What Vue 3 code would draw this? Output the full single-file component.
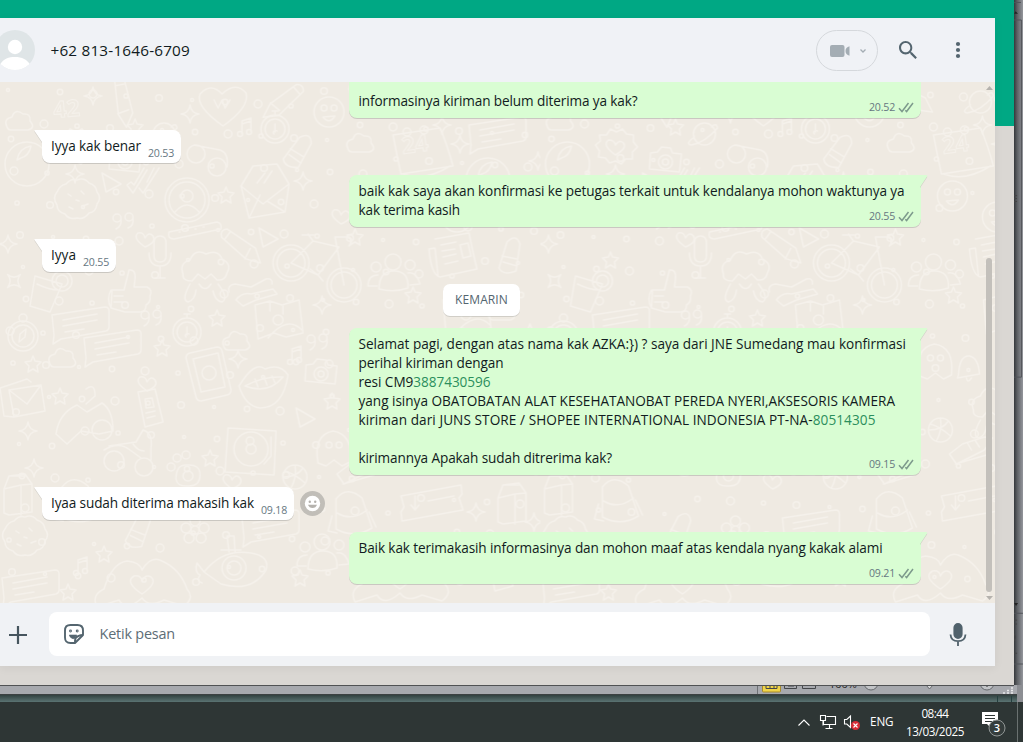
<template>
  <div class="desktop">
    <div class="upper">
      <div class="browser">
        <div class="app">
          <header class="header">
            <svg class="avatar" viewBox="0 0 40 40">
              <defs>
                <clipPath id="avatar-clip"><circle cx="20" cy="20" r="20" /></clipPath>
              </defs>
              <g clip-path="url(#avatar-clip)">
                <rect width="40" height="40" fill="#dfe5e7" />
                <circle cx="20" cy="17" r="7.2" fill="#fff" />
                <path d="M4 36C8 29 13 27 20 27s12 2 16 9l-6 6H10z" fill="#fff" />
              </g>
            </svg>
            <div class="contact"><span v-fit="139.5">+62 813-1646-6709</span></div>
            <button class="video">
              <svg width="22" height="16" viewBox="0 0 22 16">
                <rect x="1" y="2" width="14.5" height="12" rx="2" />
                <path d="M20.5 3.2v9.6c-2.600-.8-4-2.200-4-4.800s1.400-4 4-4.800z" />
              </svg>
              <svg width="8" height="6" viewBox="0 0 8 6">
                <path d="M1.500 1.500L4 4l2.500-2.500" class="chevron" />
              </svg>
            </button>
            <button class="icon search">
              <svg width="24" height="24" viewBox="0 0 24 24">
                <path d="M15.900 14.300H15l-.3-.3c1-1.100 1.600-2.700 1.600-4.300 0-3.700-3-6.700-6.700-6.700S3 6 3 9.700s3 6.700 6.700 6.700c1.600 0 3.200-.6 4.300-1.600l.3.3v.8l5.100 5.100 1.500-1.500-5-5.200zm-6.200 0c-2.600 0-4.600-2.100-4.600-4.600s2.100-4.600 4.600-4.600 4.600 2.100 4.600 4.600-2 4.600-4.600 4.600z" />
              </svg>
            </button>
            <button class="icon">
              <svg width="24" height="24" viewBox="0 0 24 24">
                <circle cx="12" cy="6" r="2.100" />
                <circle cx="12" cy="12" r="2.100" />
                <circle cx="12" cy="18" r="2.100" />
              </svg>
            </button>
          </header>

          <main class="chat">
            <svg class="wallpaper" width="995" height="521">
              <defs>
                <pattern id="doodles" width="540.5" height="521" patternUnits="userSpaceOnUse">
                  <g
                    v-for="(d, i) in doodles"
                    :key="i"
                    :transform="`translate(${d[1]} ${d[2]}) rotate(${d[3]})`"
                  >
                    <path :d="shapes[d[0]]" />
                  </g>
                  <circle v-for="(d, i) in dots" :key="'c' + i" :cx="d[0]" :cy="d[1]" :r="d[2]" />
                  <text x="403" y="72" transform="rotate(-8 403 72)">24</text>
                  <text x="54" y="36" transform="rotate(-5 54 36)">42</text>
                </pattern>
              </defs>
              <rect width="995" height="521" fill="url(#doodles)" />
            </svg>

            <div class="messages">
              <template v-for="(m, i) in messages" :key="i">
                <div v-if="m.type === 'date'" class="date"><span v-fit="53">{{ m.text }}</span></div>
                <div v-else class="row" :class="m.type">
                  <div class="bubble" :class="{ cut: m.cut, spare: m.spare }">
                    <svg v-if="!m.cut" class="tail" width="8" height="13" viewBox="0 0 8 13">
                      <path v-if="m.type === 'in'" d="M8 0H1.200Q0 0 .5 1L8 12z" />
                      <path v-else d="M0 0h6.200Q8 0 7 1.500L0 12z" />
                    </svg>
                    <div class="text">
                      <div v-for="(line, n) in m.lines" :key="n" class="line">
                        <span v-fit="line.w">{{ line.t }}<b v-if="line.link">{{ line.link }}</b></span>
                      </div>
                    </div>
                    <div class="meta">
                      <span v-fit="26">{{ m.time }}</span>
                      <svg v-if="m.type === 'out'" width="16" height="11" viewBox="0 0 16 11">
                        <path d="M1 6.200l3 3.300L10.500 1M7.300 8.200l1.300 1.300L15 1" />
                      </svg>
                    </div>
                  </div>
                  <button v-if="m.react" class="react">
                    <svg width="25" height="25" viewBox="0 0 25 25">
                      <circle cx="12.500" cy="12.500" r="12.500" fill="#c1beb8" />
                      <circle cx="12.500" cy="12.500" r="7.700" fill="#fff" />
                      <circle cx="9.800" cy="10.700" r="1.200" fill="#b5b2ad" />
                      <circle cx="15.200" cy="10.700" r="1.200" fill="#b5b2ad" />
                      <path d="M8 13.700h9c-.6 2-2.400 3.300-4.500 3.300S8.600 15.700 8 13.700z" fill="#b5b2ad" />
                    </svg>
                  </button>
                </div>
              </template>
            </div>

            <div class="scrollbar">
              <svg width="7" height="4" viewBox="0 0 7 4"><path d="M0 4l3.500-4L7 4z" /></svg>
              <div class="thumb"></div>
              <svg width="7" height="4" viewBox="0 0 7 4"><path d="M0 0l3.500 4L7 0z" /></svg>
            </div>
          </main>

          <footer class="composer">
            <svg class="plus" width="18" height="18" viewBox="0 0 18 18">
              <path d="M9 0v18M0 9h18" />
            </svg>
            <div class="input">
              <svg class="sticker" width="22" height="22" viewBox="0 0 22 22">
                <path d="M7.500 2h7Q20 2 20 7.500V12L12 20H7.500Q2 20 2 14.500v-7Q2 2 7.500 2z" />
                <path d="M12 20q-.2-3.500 1-5.500 2-2 7-2.500" />
                <path d="M6.300 12h7.500l-2 3.600q-4 .8-5.500-3.600z" fill="#54656f" stroke-width=".6" />
                <circle cx="7.500" cy="8" r=".5" />
                <circle cx="14.200" cy="8" r=".5" />
              </svg>
              <span v-fit="75.5">Ketik pesan</span>
            </div>
            <svg class="mic" width="18" height="24" viewBox="0 0 18 24">
              <rect x="5.300" y="1" width="7.400" height="14" rx="3.700" fill="#51626c" />
              <path d="M1.500 11.500c.3 4.200 3.200 6.700 7.500 6.700s7.200-2.500 7.500-6.700M9 18v5" />
            </svg>
          </footer>
        </div>
      </div>

      <!-- edge of the spreadsheet window behind the browser -->
      <svg class="behind" width="9" height="702" viewBox="0 0 9 702">
        <path d="M0 2.500h7M0 20.500h7.500V386.500H0M0 628.500h9M0 680.500h9" stroke="#505358" fill="none" />
        <path d="M0 14l1.500-2.500L4 14zM0 618h4l-2 3z" fill="#222" />
        <path d="M0 200.500h3M0 203.500h3M0 206.500h3M0 635.500h3M0 639.500h3M0 669.500h3" stroke="#444" />
        <path d="M0 649q3 4 0 8" fill="none" stroke="#444" />
      </svg>
    </div>

    <svg class="status" width="1023" height="17" viewBox="0 0 1023 17">
      <defs>
        <linearGradient id="edge" x2="0" y2="1">
          <stop offset="0" stop-color="#2b3938" />
          <stop offset="1" stop-color="#5b7473" />
        </linearGradient>
        <clipPath id="bar"><rect y="1" width="1023" height="8" /></clipPath>
      </defs>
      <rect width="1017" height="9" fill="#a7a9ae" />
      <rect width="1014" height="1" fill="#505254" />
      <rect y="9" width="1023" height="8" fill="url(#edge)" />
      <rect y="9" width="1017" height="1" fill="#3c4142" />
      <g clip-path="url(#bar)">
        <path d="M757.500 0v9" stroke="#6f7276" />
        <rect x="762.500" y="-8" width="18" height="15" rx="1" fill="#f0d449" stroke="#a78a2a" />
        <path d="M766 3.500h11V-2M766 3.500V-2M770 3V0M774 3V0M784.500-4v7.500h12V-4M788 1h6M802.500-4v7.500h13V-4" fill="none" stroke="#44474b" />
        <text x="829" y="3">100%</text>
        <circle cx="871" cy="-2" r="7" fill="#c2c4c7" stroke="#66696d" />
        <path d="M926 0l3.500 4L933 0" fill="#d7d8da" stroke="#66696d" />
        <circle cx="987" cy="-2" r="7" fill="#c2c4c7" stroke="#66696d" />
        <path d="M987-3v5" stroke="#333" />
        <path d="M1011 3h2M1007 5.500h2M1011 5.500h2M1003 8h2M1007 8h2M1011 8h2" stroke="#e7e8ea" stroke-width="1.500" />
      </g>
      <path d="M997.500 11v6M1011.500 11v6" stroke="#25403f" />
      <path d="M1017 0h6v17h-6z" fill="#8c8e93" />
    </svg>

    <div class="taskbar">
      <svg class="tray" width="64" height="18" viewBox="0 0 64 18">
        <path d="M1.500 12.500L7 7l5.500 5.500" />
        <path d="M29.500 3.500h9v8h-12V8M32.500 12v3M28.500 15.500h7M23.500 2.500h5v5h-5zM26 7.500v5" />
        <path d="M47.500 6.500h2.300l3.700-3.500v11.500l-3.700-3.500h-2.300z" />
        <circle cx="58.500" cy="12.500" r="4.500" class="muted" />
        <path d="M56.500 10.500l4 4M60.500 10.500l-4 4" />
      </svg>
      <div class="lang"><span v-fit="23.5">ENG</span></div>
      <div class="clock">
        <div><span v-fit="27">08:44</span></div>
        <div><span v-fit="58">13/03/2025</span></div>
      </div>
      <svg class="notice" width="26" height="28" viewBox="0 0 26 28">
        <path d="M1 2h16v12h-7v4l-4-4H1z" fill="#fff" />
        <path d="M4 5.500h10M4 8.500h10M4 11.500h7" stroke="#2e3635" />
        <circle cx="16" cy="18" r="8" fill="#353d3c" stroke="#929796" />
        <text x="16" y="22" text-anchor="middle">3</text>
      </svg>
      <div class="show-desktop"></div>
    </div>
  </div>
</template>

<script setup>
// Spreads the letters of an element over the given width.
const vFit = {
  mounted(el, { value }) {
    const width = el.getBoundingClientRect().width
    const count = el.textContent.length
    el.style.letterSpacing = `${(value - width) / count}px`
  }
}

const messages = [
  {
    type: 'out',
    cut: true,
    time: '20.52',
    lines: [{ t: 'informasinya kiriman belum diterima ya kak?', w: 279 }]
  },
  { type: 'in', time: '20.53', lines: [{ t: 'Iyya kak benar', w: 90 }] },
  {
    type: 'out',
    time: '20.55',
    lines: [
      { t: 'baik kak saya akan konfirmasi ke petugas terkait untuk kendalanya mohon waktunya ya', w: 546 },
      { t: 'kak terima kasih', w: 101.5 }
    ]
  },
  { type: 'in', time: '20.55', lines: [{ t: 'Iyya', w: 25 }] },
  { type: 'date', text: 'KEMARIN' },
  {
    type: 'out',
    time: '09.15',
    lines: [
      { t: 'Selamat pagi, dengan atas nama kak AZKA:}) ? saya dari JNE Sumedang mau konfirmasi', w: 547.5 },
      { t: 'perihal kiriman dengan', w: 145 },
      { t: 'resi CM9', link: '3887430596', w: 132 },
      { t: 'yang isinya OBATOBATAN ALAT KESEHATANOBAT PEREDA NYERI,AKSESORIS KAMERA', w: 536.5 },
      { t: 'kiriman dari JUNS STORE / SHOPEE INTERNATIONAL INDONESIA PT-NA-', link: '80514305', w: 517 },
      { t: '', w: 0 },
      { t: 'kirimannya Apakah sudah ditrerima kak?', w: 253.5 }
    ]
  },
  { type: 'in', time: '09.18', react: true, lines: [{ t: 'Iyaa sudah diterima makasih kak', w: 203 }] },
  {
    type: 'out',
    spare: true,
    time: '09.21',
    lines: [{ t: 'Baik kak terimakasih informasinya dan mohon maaf atas kendala nyang kakak alami', w: 524 }]
  }
]

const ring = (r, x = 0, y = 0) => `M${x - r} ${y}a${r} ${r} 0 1 0 ${2 * r} 0a${r} ${r} 0 1 0 ${-2 * r} 0`

const shapes = {
  star: 'M0-8l2 5 6 1-4 4 1 6-5-3-5 3 1-6-4-4 6-1z',
  spark: 'M0-9Q1-1 9 0 1 1 0 9-1 1-9 0-1-1 0-9z',
  person: ring(22) + ring(18) + ring(6, 0, -4) + 'M-12 12Q0-2 12 12',
  cookie: 'M-20-8q3-7 9-8 5-6 11-4 7-3 12 3 7 2 8 9 5 6 0 12-1 8-8 9-5 7-12 5-8 2-12-4-8-2-8-9-5-7 0-13z M-9-6l3 2M4-9l3 3M-8 7l4 2M6 6l5-2M-1 0l3 1',
  ball: ring(22) + 'M-10-4q2-12 14-14-2 10-10 12z',
  envelope: 'M-24-6L-12-26 12-28 24-8 20 20-16 26zM-24-6L-2 12 24-8M-5 3l-11 23M2 9l18 11M-8-9l8-10M-1-9l8-12',
  ticks: 'M-16 3l6 8L4-12M-4 6l4 5L16-14M-16 3l4-3 3 3L1-14M4 0l7-14',
  bike: ring(18, -28, 8) + ring(14, -28, 8) + ring(17, 25, 30) + ring(13, 25, 30) + 'M-28 8L-6-14 20-8-1 20zM25 30L16-18h12q8 3 2 9M-6-14l-5-7M-17-20h12M-1 20l-8-6M-1 20l5 6',
  mic: 'M-6-14q0-7 6-7t6 7V-1q0 6-6 6t-6-6zM-11-4q0 13 11 13T11-4M0 9v12M-5 21H5',
  pencil: 'M-20-10q-3-7 4-9L15-4l7 14-15-2-27-18zM-12-17l-5 9M10-3L6 8',
  thumb: 'M-18-2h12L-1-22q7-1 6 9l-1 8h13q6 3 3 9 1 6-4 9 0 7-6 7h-15L-19 16z M-19-2q-5 9 0 18M-16 4h9M-16 10h9',
  grandpa: 'M-22-2q-4-11 7-14 5-12 16-6 12-5 16 5 10 5 5 14-2 8-10 7l-6-6-6 5-7-5-6 7q-10 0-9-7zM-15 8q-9 16-2 18 7-2 8-12M13 8q11 14 4 18-7-1-9-11M-6 8q6 9 12 0',
  compass: ring(15) + ring(11) + ring(4, 0, -18) + 'M-4 6l1-8 6-5-1 8z',
  bubble: 'M-28-9L25-17q4 0 4 4v16q0 3-3 4l-45 8-8 5 1-9zM-17-4L17-10M-17 2l34-6M-15 8L4 5',
  cloud: 'M-13 5q-4-8 5-10 3-9 11-3 8-1 7 7 6 7-2 9h-17q-3 0-4-3z',
  watch: ring(14) + ring(10) + 'M-3-18h6M0-18v4M0-5V3M2 2a2 2 0 1 0-3 3',
  phone: 'M-19-20L8-26q4 0 5 4l9 39q0 4-4 5l-26 6q-4 0-5-4L-23-15q0-4 4-5zM-16-14l25-6 7 34-24 5z' + ring(7),
  lips: 'M-24 0Q-8-26 2-17 17-23 25-11 20 22-3 22-18 20-24 0zM-18 0q18-10 38-9Q5 9-18 0M-8-7l3 8M1-9l3 8M9-10l3 7',
  camera: 'M-15-9l7-1 4-5 9 1 2 5 9 1-2 18-30-3z' + ring(7) + ring(3),
  map: 'M-22-17l15-4 12 4 17-5 4 33-17 4-12-4-16 6zM-9 16Q10-7 25 8M-7-21v10M6-17v9' + ring(5, 1, -2),
  record: 'M-24-18l48 3-2 44-49-3z' + ring(17, -1, 3) + ring(5, -1, 3) + 'M19-9v19l-7 8',
  paw: 'M-9 12q0-15 11-14 13-1 13 10t-11 11Q-8 20-9 12z' + ring(4, -14, 0) + ring(4, -8, -9) + ring(4, 1, -12) + ring(5, 3, 9),
  scooter: ring(10, -17, 7) + ring(9, 13, 13) + 'M-27-4q15-9 26 0l11 8M-22-8l27-4 7-12q10 3 8 18v12M2-10q5 7 11 7',
  scooter2: 'M-30 18q3-21 21-29l10 7 15-9q11 7 11 28l-14 3-18-3-14 13z' + ring(10, 16, 14) + 'M0-27q9-7 9 7l-9 8',
  letters: 'M-27-6L0-15l4 3M-18-4l32-5 4 26-31 6zM-18-4L0 10 14-9M-27-6l4 28 10 1',
  milk: 'M-14-9l5-13 16-2 7 10v28l-23 3-5-2zM-14-9L3-13l11-1M3-13v30M-9-22h16',
  card: 'M-12-16l17-3 8 33-18 5zM-5-9l7-1 2 9-8 1zM-4 5l9-2M-3 10l8-2',
  hands: 'M-45 25q-6-12 7-18 8-26 23-28Q-2-20 0-12q9-15 20-9 18 8 25 28 8 9-3 17L22 18Q7 26 0 16-16 30-23 18zM0 12q-18-12-8-18 7-1 8 5 3-7 9-4 7 6-9 17z',
  plane: 'M-30 4Q-11-20 17-15q19 3 15 17Q18 25-13 16z' + ring(12) + ring(7) + 'M-30 4l-7-9q-3 9 3 12-4 6 2 8M-5-16l-2-16h7l1 16M-13-18h20',
  calendar: 'M-26-19l47-7q7 16 13 38L-18 20q-4-18-8-39zM-16 20q22 8 47-8' + ring(4, -12, -22) + ring(4, 5, -24),
  people: ring(8, 0, -15) + ring(5, -17, -10) + ring(5, 17, -12) + 'M-14 12q0-18 15-18t14 17q-14 5-29 1zM-16 9h-9q0-11 10-11M17 8l10-1Q23-6 15-4',
  paper: 'M-18-19l34-6q4 20 8 36l-37 8q-9-2-11-28l6-1 3 28M-12-13l15-3M-11-7l13-2M-10-1l13-3M-8 6l13-3M7-13l8-2 3 13-8 2z',
  bell: 'M-9 7Q-8-13 2-12 11-10 12 6l-22 4zM-1 10q1 6 5 0',
  basket: ring(12) + 'M-12 0Q2 0 8-9M-4 11Q2 0 0-12M10 6Q0-3-10-6',
  shoe: 'M-23 2l13-10 22-7 8 1-8 12L-16 12zM-17 12l31-9M-5-9l4 7M3-11l4 6',
  planet: ring(11) + 'M-10 3q-10 7-3 8 13-2 26-17-1-6-6-1',
  donut: 'M-20-3l5-4-1-6 7 0 4-6 6 3 6-3 4 5 7 1 0 7 4 5-5 5 0 7-7 0-4 5-6-3-6 2-4-5-7-1 1-6zM0 7q-14-10-7-15 6 0 7 5 4-6 8-2 4 5-8 12',
  drink: 'M-14-14l27 8-12 28-20-6zM-12-6q12 6 22 6' + ring(10, 13, -9) + ring(6, 13, -9),
  bottle: 'M-12 16l8-26q9-9 13 2L5 19Q-8 24-12 16zM-9 4l15 3M-8 10l14 4',
  pack: 'M-16-13Q-5-27 10-14l10 30q-18 11-36 1zM-15 1q15 9 30-3M-20 4l-4 15 9 2M17 0l7 15',
  ticket: 'M-32-8l60-11 1 9-3 4 4 12-61 11-1-9 3-5zM-5-3l26-5M-18-8v14M-22 1l4 5 4-5',
  heart: 'M0 7q-13-9-7-14 6-1 7 5 4-7 8-2 4 6-8 11z',
  bigheart: 'M0 24q-28-20-23-32 11-12 22 0 14-13 24-1 4 14-23 33zM-9-2l4 8 4-8 3 8 5-8',
  ghost: 'M-16 16q-5-28 15-32 20 3 17 31l-8 4-8-6-8 6z' + ring(3, -5, -2) + ring(3, 5, -2),
  smile: ring(15) + ring(3, -5, -4) + ring(3, 5, -4) + 'M-6 5q6 8 12-1z',
  quotes: ring(4, -7, -3) + ring(4, 5, -4) + 'M-3-2q1 7-5 10M9-3q1 8-5 10',
  music: 'M-4 7V-6l9-3V5M-4-3l9-3' + ring(2.5, -6, 7) + ring(2.5, 3, 5),
  tri: 'M-8-9L11 2-4 10z',
  ruler: 'M-25 2L23-8q5 1 4 7L-20 9q-7 0-5-7M-15 2h1M-7 0h1M1-1h1M9-3h1',
  glasses: ring(9, -12, 0) + ring(9, 9, 13) + 'M-14-9L12-4q9 3 7 17',
  tools: 'M-24 5q-2-7 6-8l16 3 15-8q7-1 6 5M-17 13q6-8 15-6L20 2l4 5-21 6-13 6z',
  flower: ring(4) + ring(5, 0, -9) + ring(5, 9, -2) + ring(5, 6, 8) + ring(5, -6, 8) + ring(5, -9, -2)
}

const doodles = [
  ['person', 187, 118, 0], ['cookie', 77, 118, 0], ['ball', 27, 82, 0], ['envelope', 265, 110, 0],
  ['ticks', 143, 100, 0], ['bike', 319, 173, 0], ['mic', 160, 175, 0], ['pencil', 240, 168, 8],
  ['thumb', 130, 210, 0], ['grandpa', 205, 194, 0], ['compass', 23, 254, 0], ['bubble', 80, 242, 0],
  ['bubble', 112, 265, 0], ['cloud', 63, 277, 0], ['cloud', 237, 260, 0], ['watch', 187, 250, 0],
  ['phone', 209, 291, 0], ['lips', 263, 304, 0], ['camera', 321, 292, 0], ['map', 277, 240, 0],
  ['record', 252, 364, 0], ['paw', 185, 385, 0], ['scooter', 131, 372, 0], ['scooter2', 86, 334, 0],
  ['letters', 27, 312, 0], ['milk', 18, 416, 0], ['card', 150, 326, 0], ['hands', 142, 500, 0],
  ['plane', 234, 486, 0], ['calendar', 419, 72, 0], ['people', 393, 195, 0], ['paper', 453, 176, 0],
  ['bell', 427, 286, 0], ['basket', 400, 348, 0], ['shoe', 432, 370, 0], ['planet', 164, 52, 0],
  ['donut', 75, 66, 0], ['drink', 49, 208, 0], ['bottle', 300, 66, 20], ['pack', 78, 418, 0],
  ['ticket', 433, 422, 0], ['bigheart', 223, 20, 0], ['glasses', 208, 72, 0], ['ghost', 395, 278, 0],
  ['smile', 329, 30, 0], ['smile', 412, 114, 0], ['cloud', 20, 40, 0], ['cloud', 361, 62, 0],
  ['ruler', 194, 148, 0], ['tools', 253, 205, 0], ['quotes', 124, 139, 0], ['quotes', 152, 236, 0],
  ['quotes', 318, 260, 0], ['music', 246, 45, 0], ['music', 296, 273, 0], ['music', 82, 484, 0],
  ['watch', 275, 47, 0], ['tri', 110, 100, 0], ['tri', 267, 155, 0], ['tri', 304, 335, 0],
  ['flower', 195, 448, 0], ['people', 322, 475, 0], ['camera', 125, 80, 0], ['bubble', 497, 52, 0],
  ['ball', 488, 98, 0], ['smile', 457, 135, 0], ['bottle', 511, 170, 0], ['cloud', 502, 230, 0],
  ['map', 465, 235, 0], ['phone', 500, 285, 0], ['grandpa', 455, 330, 0], ['record', 500, 360, 0],
  ['milk', 512, 425, 0], ['hands', 400, 495, 0], ['pack', 352, 430, 0], ['card', 500, 490, 0],
  ['shoe', 360, 390, 0], ['ghost', 334, 365, 0], ['basket', 295, 395, 0], ['pencil', 370, 20, 0],
  ['planet', 440, 20, 0], ['camera', 505, 12, 0], ['pencil', 120, 22, 50], ['cookie', 25, 455, 0],
  ['bottle', 140, 445, 10], ['bubble', 30, 505, 0], ['bubble', 270, 445, 0], ['pencil', 280, 18, 110],
  ['heart', 145, 158, 0], ['heart', 341, 135, 0], ['heart', 147, 302, 0], ['heart', 232, 400, 0],
  ['star', 135, 45, 0], ['star', 226, 113, 0], ['star', 217, 236, 0], ['star', 162, 266, 0],
  ['star', 33, 282, 0], ['star', 60, 314, 0], ['star', 332, 319, 0], ['star', 210, 376, 0],
  ['star', 104, 472, 0], ['star', 300, 496, 0], ['star', 68, 510, 0], ['star', 355, 155, 0],
  ['star', 413, 213, 0], ['star', 530, 250, 0], ['star', 465, 290, 0], ['star', 70, 178, 0],
  ['spark', 93, 14, 0], ['spark', 190, 32, 0], ['spark', 75, 92, 0], ['spark', 303, 99, 0],
  ['spark', 8, 162, 0], ['spark', 238, 277, 0], ['spark', 28, 349, 0], ['spark', 34, 386, 0],
  ['spark', 322, 223, 0], ['spark', 442, 43, 0], ['spark', 476, 430, 0], ['spark', 534, 440, 0],
  ['spark', 460, 62, 0], ['spark', 538, 79, 0], ['spark', 14, 199, 45]
]

// Small rings on a jittered grid between the larger drawings
const dots = []
for (let row = 0; row < 15; row++) {
  for (let col = 0; col < 16; col++) {
    const n = row * 16 + col
    dots.push([8 + col * 34 + ((n * 37) % 19), 8 + row * 34 + ((n * 53) % 17), 1.5 + ((n * 7) % 5) * 0.6])
  }
}
</script>

<style>
body {
  margin: 0;
  overflow: hidden;
}
</style>

<style scoped>
.desktop {
  width: 1023px;
  height: 742px;
  overflow: hidden;
  display: flex;
  flex-direction: column;
  background: #2e3635;
  font-family: "Open Sans", "Noto Sans", sans-serif;
  color: #111b21;
}

button {
  padding: 0;
  border: 0;
  background: none;
  font: inherit;
}

svg {
  display: block;
  flex-shrink: 0;
}

.upper {
  display: flex;
  height: 685px;
  flex-shrink: 0;
}

.browser {
  width: 1014px;
  box-sizing: border-box;
  padding-top: 18px;
  background: linear-gradient(#00a884 126px, #dad7d3 126px);
}

.behind {
  height: 685px;
  background: linear-gradient(90deg, #35383b, #5d6064 35%, #94969c);
}

.app {
  width: 995px;
  height: 648px;
  display: flex;
  flex-direction: column;
  background: #f0f2f5;
  box-shadow: 0 2px 9px rgba(0, 0, 0, 0.06);
}

.header {
  height: 64px;
  flex-shrink: 0;
  display: flex;
  align-items: center;
  background: #f0f2f6;
}

.avatar {
  width: 40px;
  height: 40px;
  margin-left: -5px;
}

.contact {
  flex: 1;
  margin-left: 15.5px;
  font-size: 15.3px;
  white-space: nowrap;
}

.video {
  width: 62px;
  height: 41px;
  box-sizing: border-box;
  border: 1px solid #d5d8dc;
  border-radius: 21px;
  display: flex;
  align-items: center;
  justify-content: center;
  gap: 8px;
  padding: 1px 0 0 1px;
  fill: #a4adb4;
}

.chevron {
  fill: none;
  stroke: #a4adb4;
  stroke-width: 1.3;
}

.icon {
  fill: #54656f;
  margin-right: 25px;
}

.search {
  margin: 0 26px 0 18px;
}

.chat {
  position: relative;
  height: 521px;
  background: #efeae2;
  overflow: hidden;
}

.wallpaper {
  position: absolute;
  inset: 0;
  fill: none;
  stroke: #f5f1eb;
  stroke-width: 1.5;
  stroke-linejoin: round;
  stroke-linecap: round;
}

.wallpaper rect {
  stroke: none;
}

.wallpaper text {
  font: 700 23px "Noto Sans", sans-serif;
  stroke-width: 1;
}

.messages {
  position: relative;
  display: flex;
  flex-direction: column;
  gap: 12px;
}

.row {
  display: flex;
  align-items: center;
  gap: 6px;
  padding-left: 42px;
}

.row.out {
  padding-left: 349px;
}

.bubble {
  position: relative;
  box-sizing: border-box;
  display: flex;
  padding: 6px 7px 8px 9px;
  background: #fff;
  border-radius: 8px;
  box-shadow: 0 1px 0.5px rgba(11, 20, 26, 0.16);
}

.in .bubble {
  height: 33px;
  border-top-left-radius: 0;
}

.out .bubble {
  width: 572px;
  padding-left: 9.5px;
  background: #d9fdd3;
  border-top-right-radius: 0;
}

.bubble.cut {
  height: 36px;
  padding-top: 9px;
  border-radius: 0 0 8px 8px;
}

.bubble.spare {
  height: 52px;
}

.tail {
  position: absolute;
  top: 0;
  left: -8px;
  fill: #fff;
  filter: drop-shadow(0 1px 0.5px rgba(11, 20, 26, 0.13));
}

.out .tail {
  left: auto;
  right: -7px;
  fill: #d9fdd3;
}

.text {
  font-size: 13.6px;
}

.line {
  height: 19px;
  line-height: 19px;
  white-space: pre;
}

.line b {
  font-weight: 400;
  color: #2c8f5d;
}

.meta {
  display: flex;
  align-items: center;
  gap: 3px;
  height: 15px;
  font-size: 10.6px;
  line-height: 15px;
  color: #667781;
  white-space: nowrap;
}

.in .meta {
  margin: 10px 0 0 7px;
}

.out .meta {
  position: absolute;
  right: 7px;
  bottom: 3px;
}

.meta path {
  fill: none;
  stroke: #7d9a8c;
  stroke-width: 1.5;
}

.date {
  align-self: flex-start;
  margin-left: 443px;
  width: 77px;
  height: 32px;
  box-sizing: border-box;
  padding-left: 12px;
  font-size: 12px;
  line-height: 32px;
  color: #54656f;
  background: #fff;
  border-radius: 7px;
  box-shadow: 0 1px 0.5px rgba(11, 20, 26, 0.13);
}

.scrollbar {
  position: absolute;
  top: 4px;
  right: 2px;
  bottom: 3px;
  width: 7px;
  display: flex;
  flex-direction: column;
  justify-content: space-between;
  fill: #b5b2ad;
}

.thumb {
  width: 6px;
  height: 334px;
  margin: 164px 0 0;
  border-radius: 3px;
  background: #c3c0bb;
}

.composer {
  flex: 1;
  display: flex;
  align-items: center;
  padding-left: 9px;
}

.plus {
  fill: none;
  stroke: #46555e;
  stroke-width: 2.2;
}

.input {
  width: 881px;
  height: 44px;
  box-sizing: border-box;
  margin: 0 19px 2px 22px;
  padding-left: 14px;
  display: flex;
  align-items: center;
  gap: 14.5px;
  background: #fff;
  border-radius: 8px;
  color: #5d6d76;
  font-size: 14.4px;
}

.sticker {
  fill: none;
  stroke: #54656f;
  stroke-width: 1.9;
  stroke-linejoin: round;
}

.mic {
  fill: none;
  stroke: #51626c;
  stroke-width: 1.8;
}

.status text {
  font-size: 11px;
  fill: #222;
}

.taskbar {
  height: 40px;
  display: flex;
  align-items: center;
  color: #fff;
  font-size: 11.7px;
  background: #2e3635;
}

.tray {
  margin-left: 797px;
  fill: none;
  stroke: #fff;
  stroke-width: 1.1;
}

.tray .muted {
  fill: #d92b36;
  stroke: none;
}

.lang {
  width: 27px;
  margin: 0 0 2px 9px;
}

.clock {
  width: 70px;
  margin: 0 0 1px 3px;
  line-height: 18px;
  text-align: center;
}

.clock div {
  white-space: nowrap;
}

.notice {
  margin: 4px 0 0 11px;
}

.notice text {
  fill: #fff;
  font-size: 11px;
  font-weight: 600;
}

.show-desktop {
  width: 1px;
  height: 40px;
  margin-left: 10px;
  background: #6a7170;
}
</style>
